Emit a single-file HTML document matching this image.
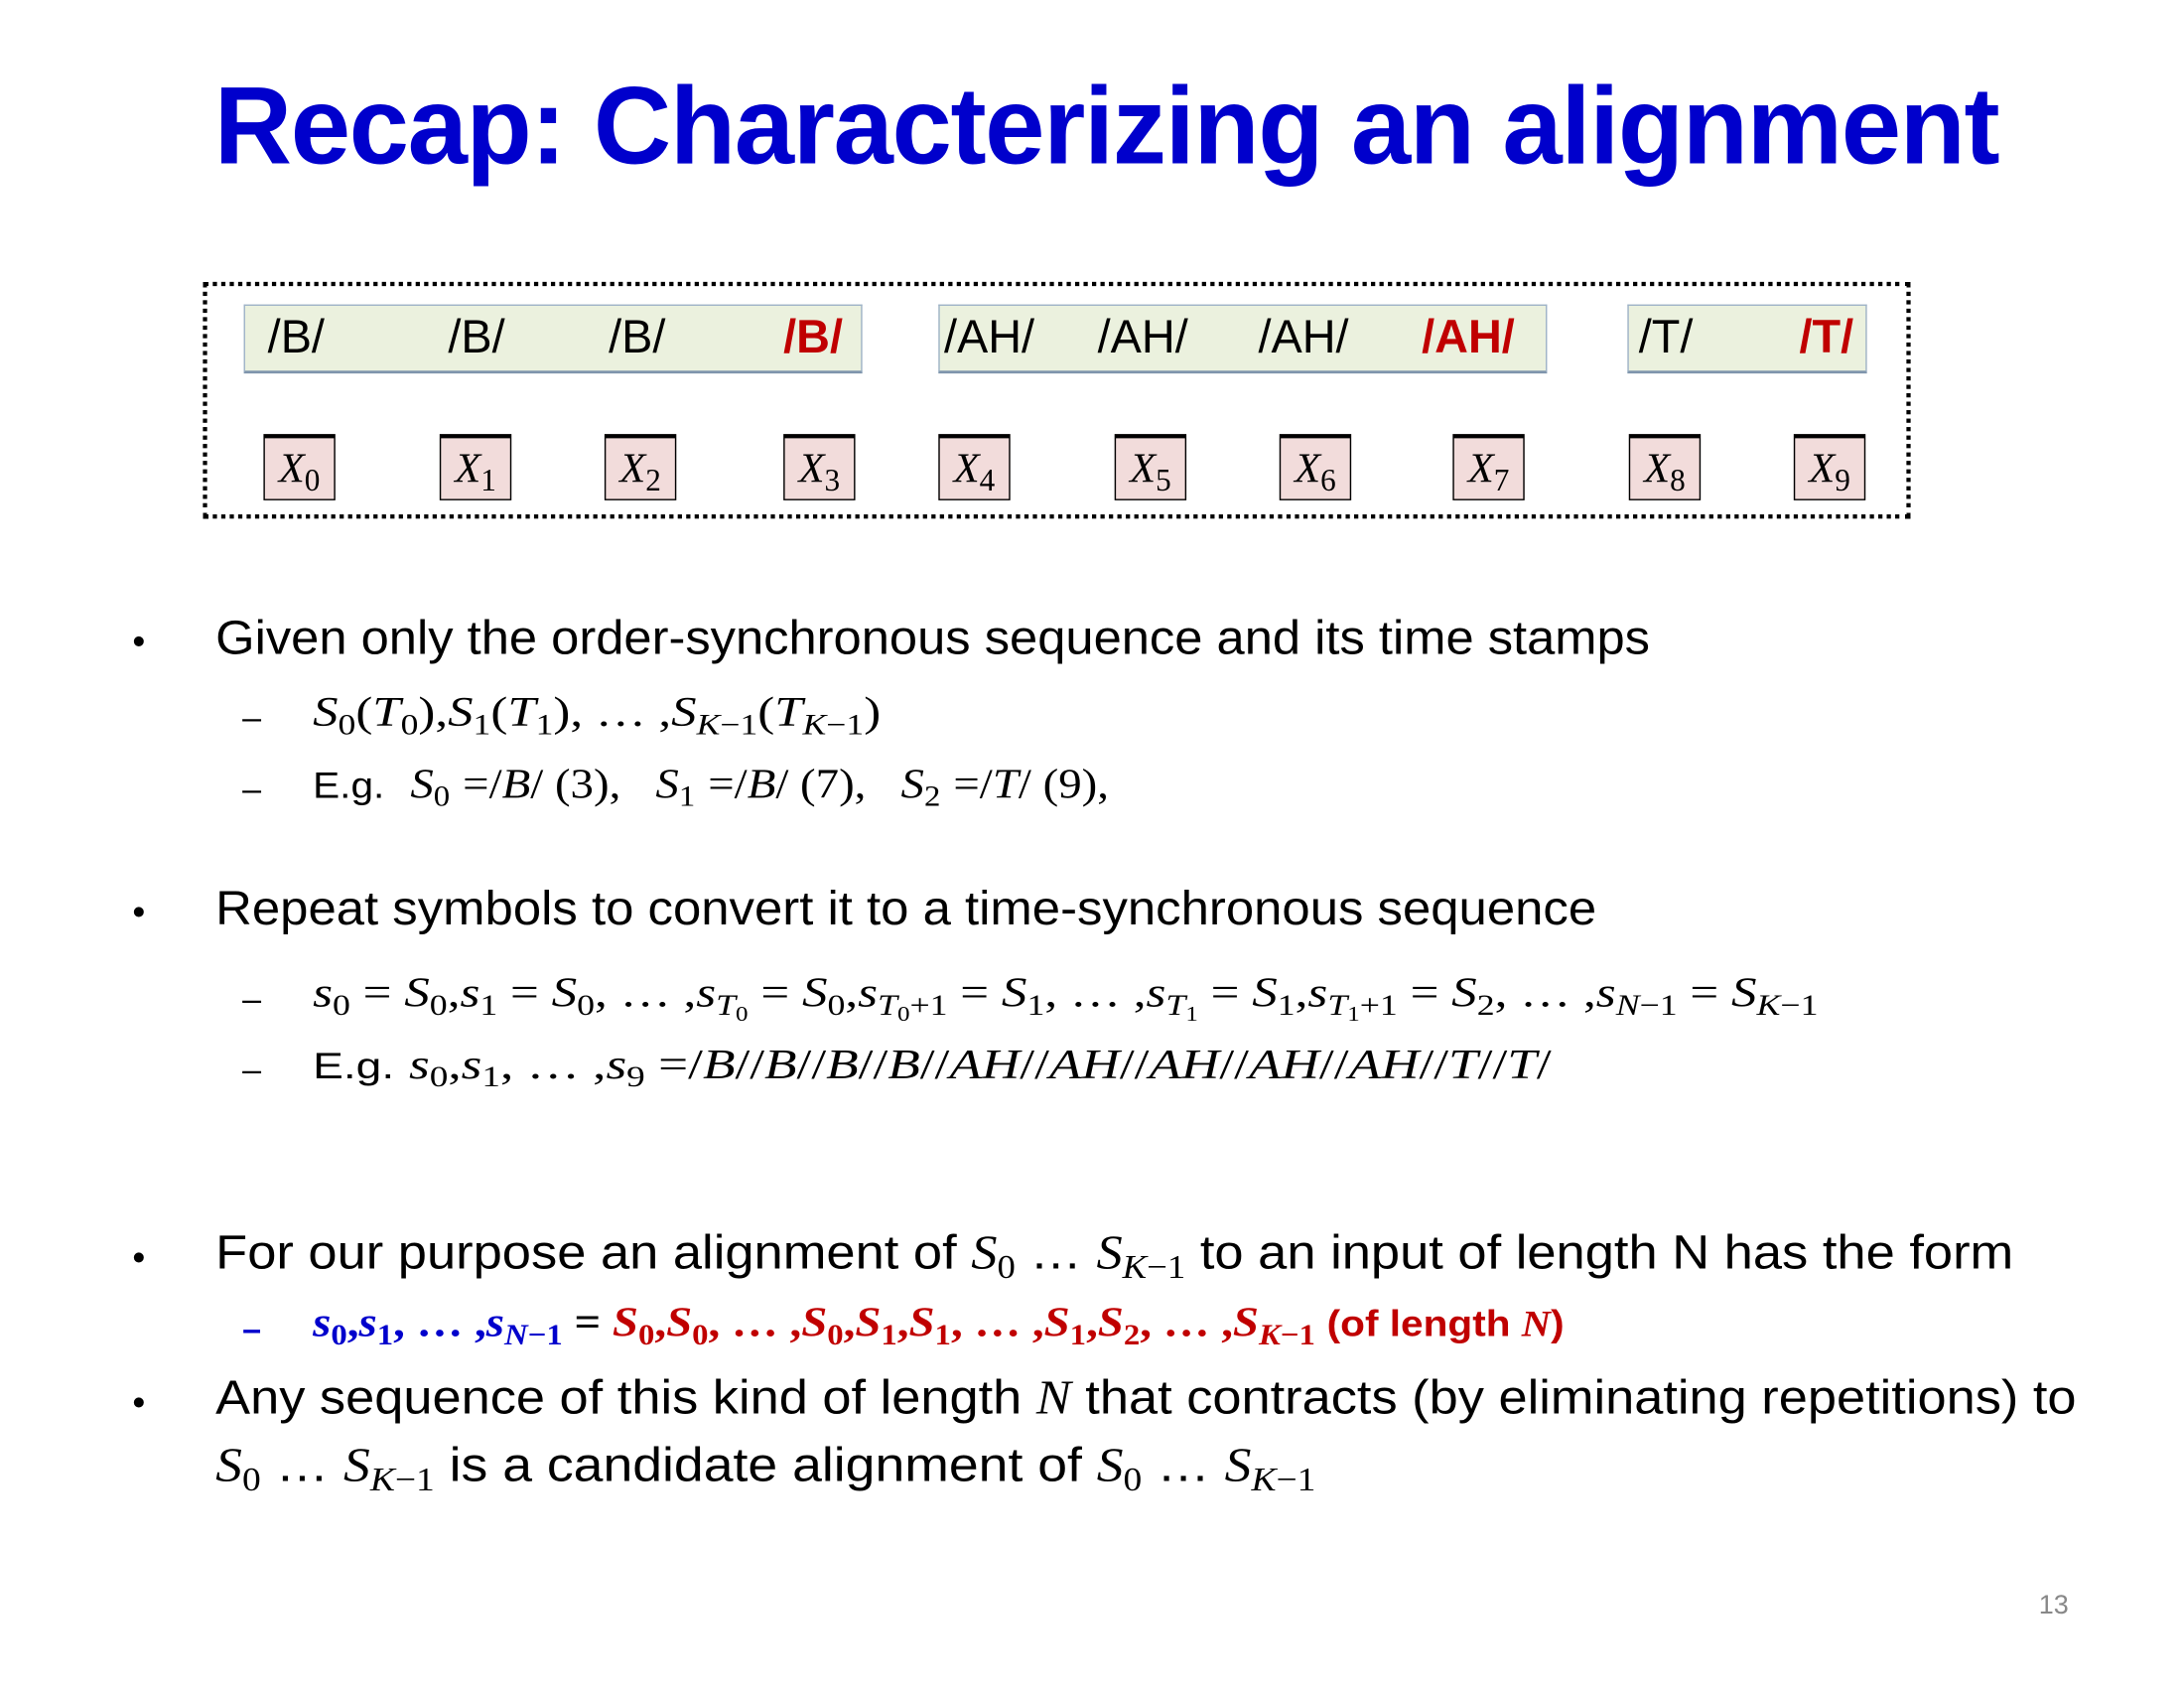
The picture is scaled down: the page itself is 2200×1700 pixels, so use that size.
<!DOCTYPE html>
<html><head><meta charset="utf-8"><style>
html,body{margin:0;padding:0;background:#fff;}
body{width:2200px;height:1700px;overflow:hidden;position:relative;}
#s{position:absolute;left:0;top:0;width:1550px;height:1198px;transform:scale(1.41935);transform-origin:0 0;font-family:"Liberation Sans",sans-serif;color:#000;}
.a{position:absolute;white-space:nowrap;line-height:1;transform-origin:0 0;}
.m{font-family:"Liberation Serif",serif;font-style:italic;}
.r{font-family:"Liberation Serif",serif;font-style:normal;}
sub{font-size:70%;vertical-align:-0.28em;line-height:0;}
.g{position:absolute;background:#EBF1DE;border:1px solid #9fb3c8;border-bottom:2px solid #7f95ad;height:46px;top:216px;}
.x{position:absolute;top:308px;width:49px;height:43px;background:#F2DCDB;border:1.5px solid #000;border-top:3px solid #000;font-family:"Liberation Serif",serif;font-style:italic;font-size:30px;line-height:43px;text-align:center;}
.x sub{font-style:normal;font-size:22px;}
.ph{position:absolute;top:222px;font-size:33px;line-height:1;}
.rd{color:#C00000;font-weight:bold;}
.b{position:absolute;left:94px;font-size:26px;}
.d{position:absolute;left:172px;font-size:24px;}
.t{font-size:34px;}
.st{font-size:30px;}
.st .sa{font-size:26px;}
</style></head><body><div id="s">
<div class="a" style="left:152px;top:50px;font-size:78px;font-weight:bold;color:#0000CC;transform:scaleX(0.98);letter-spacing:-1px;">Recap: Characterizing an alignment</div>

<div style="position:absolute;left:144px;top:200px;width:1206px;height:162px;border:3px dotted #000;"></div>
<div class="g" style="left:173px;width:437px;"></div>
<div class="g" style="left:666px;width:430px;"></div>
<div class="g" style="left:1155px;width:168px;"></div>
<div class="ph" style="left:190px">/B/</div>
<div class="ph" style="left:318px">/B/</div>
<div class="ph" style="left:432px">/B/</div>
<div class="ph rd" style="left:556px">/B/</div>
<div class="ph" style="left:670px">/AH/</div>
<div class="ph" style="left:779px">/AH/</div>
<div class="ph" style="left:893px">/AH/</div>
<div class="ph rd" style="left:1009px">/AH/</div>
<div class="ph" style="left:1163px">/T/</div>
<div class="ph rd" style="left:1277px">/T/</div>

<div class="x" style="left:187px">X<sub>0</sub></div>
<div class="x" style="left:312px">X<sub>1</sub></div>
<div class="x" style="left:429px">X<sub>2</sub></div>
<div class="x" style="left:556px">X<sub>3</sub></div>
<div class="x" style="left:666px">X<sub>4</sub></div>
<div class="x" style="left:791px">X<sub>5</sub></div>
<div class="x" style="left:908px">X<sub>6</sub></div>
<div class="x" style="left:1031px">X<sub>7</sub></div>
<div class="x" style="left:1156px">X<sub>8</sub></div>
<div class="x" style="left:1273px">X<sub>9</sub></div>

<div class="b" style="top:440px">•</div>
<div class="a t" style="left:153px;top:436px;transform:scaleX(1.05)">Given only the order-synchronous sequence and its time stamps</div>
<div class="d" style="top:496px">–</div>
<div class="a st m" style="left:222px;top:491px;transform:scaleX(1.195)">S<sub class="r">0</sub><span class="r">(</span>T<sub class="r">0</sub><span class="r">),</span>S<sub class="r">1</sub><span class="r">(</span>T<sub class="r">1</sub><span class="r">), … ,</span>S<sub>K<span class="r">−1</span></sub><span class="r">(</span>T<sub>K<span class="r">−1</span></sub><span class="r">)</span></div>
<div class="d" style="top:547px">–</div>
<div class="a st" style="left:222px;top:542px;transform:scaleX(1.1)"><span class="sa">E.g.</span>&nbsp; <span class="m">S<sub class="r">0</sub></span> <span class="r">=/</span><span class="m">B</span><span class="r">/ (3),&nbsp;&nbsp; </span><span class="m">S<sub class="r">1</sub></span> <span class="r">=/</span><span class="m">B</span><span class="r">/ (7),&nbsp;&nbsp; </span><span class="m">S<sub class="r">2</sub></span> <span class="r">=/</span><span class="m">T</span><span class="r">/ (9),</span></div>

<div class="b" style="top:632px">•</div>
<div class="a t" style="left:153px;top:628px;transform:scaleX(1.054)">Repeat symbols to convert it to a time-synchronous sequence</div>
<div class="d" style="top:696px">–</div>
<div class="a st m" style="left:222px;top:690px;transform:scaleX(1.2)">s<sub class="r">0</sub> <span class="r">=</span> S<sub class="r">0</sub><span class="r">,</span>s<sub class="r">1</sub> <span class="r">=</span> S<sub class="r">0</sub><span class="r">, … ,</span>s<sub>T<sub class="r">0</sub></sub> <span class="r">=</span> S<sub class="r">0</sub><span class="r">,</span>s<sub>T<sub class="r">0</sub><span class="r">+1</span></sub> <span class="r">=</span> S<sub class="r">1</sub><span class="r">, … ,</span>s<sub>T<sub class="r">1</sub></sub> <span class="r">=</span> S<sub class="r">1</sub><span class="r">,</span>s<sub>T<sub class="r">1</sub><span class="r">+1</span></sub> <span class="r">=</span> S<sub class="r">2</sub><span class="r">, … ,</span>s<sub>N<span class="r">−1</span></sub> <span class="r">=</span> S<sub>K<span class="r">−1</span></sub></div>
<div class="d" style="top:746px">–</div>
<div class="a st" style="left:222px;top:741px;transform:scaleX(1.25)"><span class="sa">E.g.</span> <span class="m">s<sub class="r">0</sub><span class="r">,</span>s<sub class="r">1</sub><span class="r">, … ,</span>s<sub class="r">9</sub> <span class="r">=/</span>B<span class="r">//</span>B<span class="r">//</span>B<span class="r">//</span>B<span class="r">//</span>AH<span class="r">//</span>AH<span class="r">//</span>AH<span class="r">//</span>AH<span class="r">//</span>AH<span class="r">//</span>T<span class="r">//</span>T<span class="r">/</span></span></div>

<div class="b" style="top:877px">•</div>
<div class="a t" style="left:153px;top:872px;transform:scaleX(1.087)">For our purpose an alignment of <span class="m">S<sub class="r">0</sub></span> … <span class="m">S<sub>K<span class="r">−1</span></sub></span> to an input of length N has the form</div>
<div class="d" style="top:930px;color:#0000CC;font-weight:bold">–</div>
<div class="a st m" style="left:222px;top:924px;font-weight:bold;transform:scaleX(1.1)"><span style="color:#0000CC">s<sub class="r">0</sub><span class="r">,</span>s<sub class="r">1</sub><span class="r">, … ,</span>s<sub>N<span class="r">−1</span></sub></span> <span class="r">=</span> <span style="color:#C00000">S<sub class="r">0</sub><span class="r">,</span>S<sub class="r">0</sub><span class="r">, … ,</span>S<sub class="r">0</sub><span class="r">,</span>S<sub class="r">1</sub><span class="r">,</span>S<sub class="r">1</sub><span class="r">, … ,</span>S<sub class="r">1</sub><span class="r">,</span>S<sub class="r">2</sub><span class="r">, … ,</span>S<sub>K<span class="r">−1</span></sub> <span class="sa" style="font-family:'Liberation Sans',sans-serif;font-style:normal">(of length <span class="m">N</span>)</span></span></div>

<div class="b" style="top:980px">•</div>
<div class="a t" style="left:153px;top:975px;transform:scaleX(1.085)">Any sequence of this kind of length <span class="m">N</span> that contracts (by eliminating repetitions) to</div>
<div class="a t" style="left:153px;top:1023px;transform:scaleX(1.11)"><span class="m">S<sub class="r">0</sub></span> … <span class="m">S<sub>K<span class="r">−1</span></sub></span> is a candidate alignment of <span class="m">S<sub class="r">0</sub></span> … <span class="m">S<sub>K<span class="r">−1</span></sub></span></div>

<div class="a" style="left:1447px;top:1130px;font-size:19px;color:#888;">13</div>
</div></body></html>
